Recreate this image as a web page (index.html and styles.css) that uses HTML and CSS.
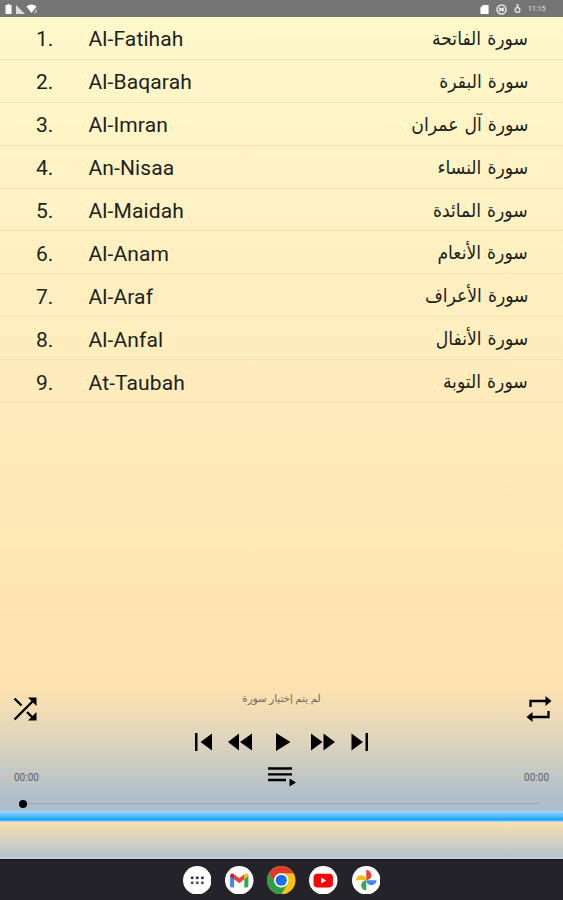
FILE: index.html
```html
<!DOCTYPE html>
<html lang="en">
<head>
<meta charset="utf-8">
<title>Quran Player</title>
<link rel="stylesheet" href="styles.css">
</head>
<body>
<div class="screen">
  <header class="status">
    <svg class="status-left" width="34" height="12" viewBox="0 0 34 12" fill="#fff"><path d="M1.500 2h2V1h2v1h2v9h-6z"/><path d="M12 2l9 9h-9z" opacity=".75"/><path d="M22.500 3.500q5-4 10 0L27.500 10z"/><path d="M32 5l1 4-3 2z" opacity=".5"/></svg>
    <div class="status-right">
      <svg width="9" height="10" viewBox="0 0 9 11"><path d="M3 1h6v10H0V4z" fill="#fff"/></svg>
      <svg width="11" height="11" viewBox="0 0 11 11" fill="none" stroke="#e6e6e6" stroke-width="1.500"><circle cx="5.500" cy="5.500" r="4.500"/><path d="M3 4l5 3M8 4L3 7" stroke-width="1.800"/></svg>
      <svg width="7" height="10" viewBox="0 0 7 10" fill="none" stroke="#ddd"><path d="M3.500 0v4" stroke-width="2"/><circle cx="3.500" cy="6" r="2.400" stroke-width="1.400"/></svg>
      <span class="clock">11:15</span>
    </div>
  </header>
  <main class="list">
    <div class="row"><span class="num">1.</span><span class="name">Al-Fatihah</span><span class="arabic" dir="rtl" lang="ar">سورة الفاتحة</span></div>
    <div class="row"><span class="num">2.</span><span class="name">Al-Baqarah</span><span class="arabic" dir="rtl" lang="ar">سورة البقرة</span></div>
    <div class="row"><span class="num">3.</span><span class="name">Al-Imran</span><span class="arabic" dir="rtl" lang="ar">سورة آل عمران</span></div>
    <div class="row"><span class="num">4.</span><span class="name">An-Nisaa</span><span class="arabic" dir="rtl" lang="ar">سورة النساء</span></div>
    <div class="row"><span class="num">5.</span><span class="name">Al-Maidah</span><span class="arabic" dir="rtl" lang="ar">سورة المائدة</span></div>
    <div class="row"><span class="num">6.</span><span class="name">Al-Anam</span><span class="arabic" dir="rtl" lang="ar">سورة الأنعام</span></div>
    <div class="row"><span class="num">7.</span><span class="name">Al-Araf</span><span class="arabic" dir="rtl" lang="ar">سورة الأعراف</span></div>
    <div class="row"><span class="num">8.</span><span class="name">Al-Anfal</span><span class="arabic" dir="rtl" lang="ar">سورة الأنفال</span></div>
    <div class="row"><span class="num">9.</span><span class="name">At-Taubah</span><span class="arabic" dir="rtl" lang="ar">سورة التوبة</span></div>
  </main>
  <section class="player">
    <div class="top">
      <svg width="24" height="24" viewBox="0 0 24 24"><path d="M1.500 1.500l7 7M1.500 22.500L20 4M14 15l6 6" fill="none" stroke="#000" stroke-width="2.400"/><path d="M15 .5h8.500V9zM23.500 15v8.500H15z"/></svg>
      <p class="title" dir="rtl" lang="ar">لم يتم إختيار سورة</p>
      <svg width="26" height="28" viewBox="0 0 26 28"><path d="M4.500 12V6H20M22.500 16v6H6" fill="none" stroke="#000" stroke-width="2.300"/><path d="M19.500 1l6 5-6 5zM6.500 17l-6 5 6 5z"/></svg>
    </div>
    <svg class="controls" width="174" height="18" viewBox="0 0 174 18"><path d="M0 0h2.500v18H0zM17 .5v17L5.500 9zM44 .5v17L33 9zM57 .5v17L45 9zM81 0v18l14.500-9zM116 .5v17L127.500 9zM128.500 .5v17L140 9zM156.500 .5v17L168 9zM170.500 0h2.500v18h-2.500z"/></svg>
    <div class="times">
      <span>00:00</span>
      <svg width="28" height="20" viewBox="0 0 28 20"><path d="M0 1.500h24M0 7.300h24M0 13h18" stroke="#000" stroke-width="2.300"/><path d="M21.500 11.500l6.500 4-6.500 4z"/></svg>
      <span>00:00</span>
    </div>
    <div class="seek"><i class="thumb"></i><i class="track"></i></div>
  </section>
  <div class="stripe"></div>
  <div class="banner"></div>
  <nav class="dock">
    <svg class="app" viewBox="0 0 28 28"><circle cx="14" cy="14" r="14" fill="#fff"/><g fill="#30305f"><circle cx="9" cy="11.500" r="1.500"/><circle cx="14" cy="11.500" r="1.500"/><circle cx="19" cy="11.500" r="1.500"/></g><g fill="#55555f"><circle cx="9" cy="16.500" r="1.500"/><circle cx="14" cy="16.500" r="1.500"/><circle cx="19" cy="16.500" r="1.500"/></g></svg>
    <svg class="app" viewBox="0 0 28 28"><circle cx="14" cy="14" r="14" fill="#fff"/><path d="M5 9l4 3v9H6.500Q5 21 5 19.500z" fill="#4285f4"/><path d="M23 9l-4 3v9h2.500q1.500 0 1.500-1.500z" fill="#34a853"/><path d="M9 8l5 4 5-4v5l-5 4-5-4z" fill="#ea4335"/><path d="M5 9.500Q5.500 6 9 8v5l-4-3z" fill="#c5221f"/><path d="M23 9.500Q22.500 6 19 8v5l4-3z" fill="#fbbc04"/></svg>
    <svg class="app" viewBox="0 0 28 28"><circle cx="14" cy="14" r="14" fill="#fbc116"/><path d="M1.880 7A14 14 0 0 1 26.120 7H14a7 7 0 0 0-6.060 10.500z" fill="#db3a2c"/><path d="M1.880 7l6.060 10.500A7 7 0 0 0 20.060 17.500L14 28A14 14 0 0 1 1.880 7z" fill="#2f9c48"/><circle cx="14" cy="14" r="7" fill="#fff"/><circle cx="14" cy="14" r="5.500" fill="#1a6ee8"/></svg>
    <svg class="app" viewBox="0 0 28 28"><circle cx="14" cy="14" r="14" fill="#fff"/><rect x="4.500" y="7.500" width="19" height="13.500" rx="3.500" fill="#f00"/><path d="M12 11.200v6l5-3z" fill="#fff"/></svg>
    <svg class="app" viewBox="0 0 28 28"><circle cx="14" cy="14" r="14" fill="#fff"/><path d="M14 14V4a5 5 0 0 1 0 10z" fill="#ea4335"/><path d="M14 14h10a5 5 0 0 1-10 0z" fill="#4285f4"/><path d="M14 14v10a5 5 0 0 1 0-10z" fill="#34a853"/><path d="M14 14H4a5 5 0 0 1 10 0z" fill="#fbbc04"/></svg>
  </nav>
</div>
</body>
</html>
```

FILE: styles.css
```css
* { box-sizing: border-box; }
body { margin: 0; font-family: Roboto, "DejaVu Sans", sans-serif; color: #201f18; }
svg { display: block; flex: none; }
.screen {
  width: 563px;
  height: 900px;
  display: flex;
  flex-direction: column;
  overflow: hidden;
  background: linear-gradient(#fff8cb 17px, #ffe2b0 686px);
}
.status {
  height: 17px;
  flex: none;
  display: flex;
  justify-content: space-between;
  align-items: center;
  padding: 1px 18px 0 4px;
  background: #757575;
}
.status-right { display: flex; align-items: center; gap: 7px; }
.clock { width: 17px; font-size: 7px; line-height: 10px; color: #e2e2e2; }
.list { flex: 1; }
.row {
  height: 42.9px;
  display: flex;
  align-items: center;
  padding: 3px 35px 0 36px;
  border-bottom: 1px solid #f0e2bb;
  font-size: 21px;
}
.num { width: 52.5px; }
.name { flex: 1; letter-spacing: .12px; }
.arabic {
  font-size: 19px;
  line-height: 24px;
  word-spacing: 2px;
  padding-bottom: 1px;
  transform: scaleX(.905);
  transform-origin: right;
}
.player {
  height: 125px;
  flex: none;
  background: linear-gradient(#ffe2b0, #ddd4bd 45%, #b0bfca 88%, #aebdca);
}
.top { height: 48px; display: flex; justify-content: space-between; align-items: center; padding: 0 11px 3px 13px; }
.title { margin: 0 0 20px; font-size: 10.3px; line-height: 14px; color: #75664f; }
.controls { margin: -1px 0 0 195px; }
.times {
  height: 26px;
  margin-top: 13px;
  display: flex;
  justify-content: space-between;
  align-items: center;
  padding: 0 14px;
  font-size: 10px;
  color: #5b6266;
}
.seek { height: 26px; display: flex; align-items: center; padding: 1px 23px 0 19px; }
.thumb { width: 8px; height: 8px; border-radius: 50%; background: #000; }
.track { flex: 1; height: 1.500px; background: #9ba8b2; }
.stripe { height: 11px; flex: none; background: linear-gradient(#9dd6ff, #4db7f8 50%, #1c9ded 80%, #b9e5f6); }
.banner {
  height: 37px;
  flex: none;
  border-bottom: 2px solid #c3d0da;
  background: linear-gradient(#f9deb0, #d9d3bf 45%, #b5c4cc);
}
.dock {
  height: 41px;
  flex: none;
  display: flex;
  justify-content: center;
  align-items: center;
  gap: 13.7px;
  background: #25232a;
  border-top: 1px solid #111;
}
.app { width: 28.500px; height: 28.500px; }
```
